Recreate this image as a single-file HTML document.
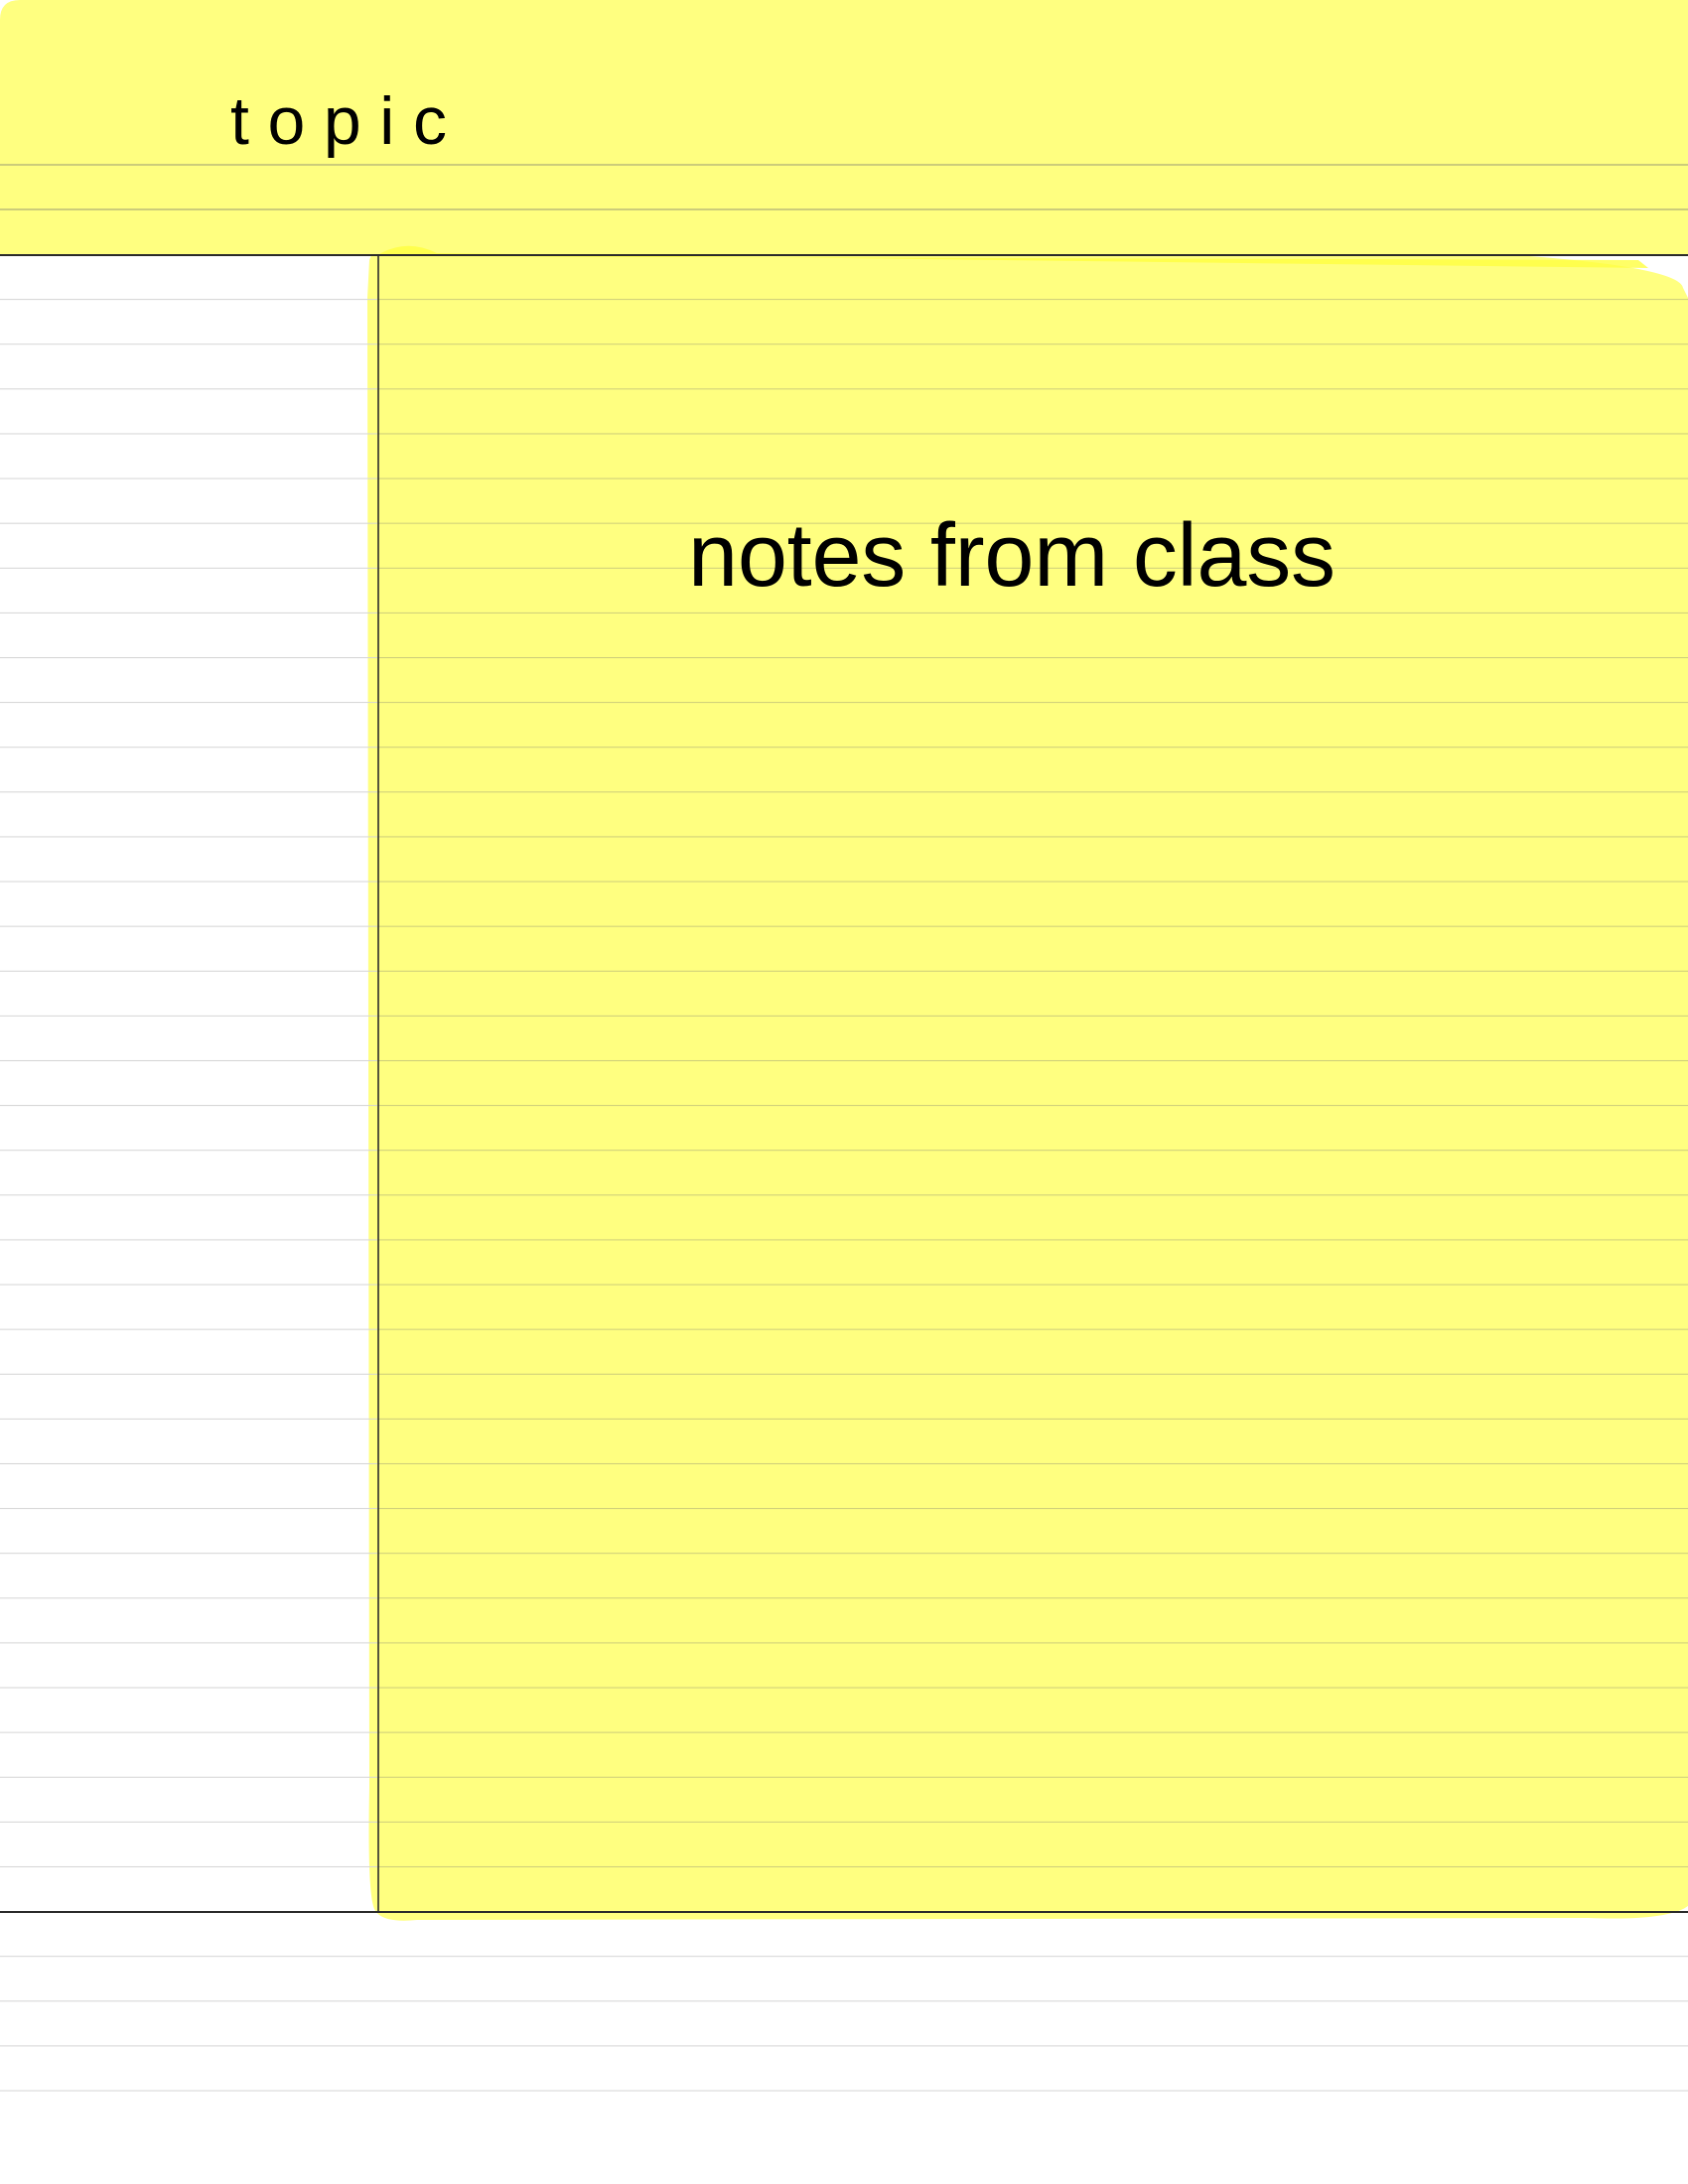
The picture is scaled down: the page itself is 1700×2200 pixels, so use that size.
<!DOCTYPE html>
<html><head><meta charset="utf-8"><style>
html,body{margin:0;padding:0;background:#fff;}
svg{display:block;}
</style></head><body>
<svg width="1700" height="2200" viewBox="0 0 1700 2200" xmlns="http://www.w3.org/2000/svg">
<defs>
<pattern id="pw" x="0" y="257" width="1700" height="45.11" patternUnits="userSpaceOnUse">
<rect x="0" y="44.11" width="1700" height="2" fill="#d4d4d4"/>
</pattern>
<pattern id="py" x="0" y="257" width="1700" height="45.11" patternUnits="userSpaceOnUse">
<rect x="0" y="44.11" width="1700" height="2" fill="#cccc7a"/>
</pattern>
</defs>
<rect width="1700" height="2200" fill="#ffffff"/>
<!-- top yellow -->
<path d="M0 20 Q0 0 20 0 L1700 0 L1700 258 L0 258 Z" fill="#ffff80"/>
<!-- right highlight -->
<path d="M372 262 Q380 240 400 236 Q420 232 440 252 L1400 250 Q1690 262 1695 290 L1700 300 L1700 1920 Q1680 1935 1600 1932 L420 1934 Q380 1938 376 1920 Q370 1900 372 1800 L370 300 Z" fill="#ffff80"/>
<path d="M382 256 Q410 240 440 255 L1660 270 L1650 262 L420 258 Z" fill="#ffff40" opacity="0.8"/>
<rect x="0" y="165" width="1700" height="2" fill="#cccc7a"/>
<rect x="0" y="210" width="1700" height="2" fill="#cccc7a"/>
<rect x="0" y="258" width="380" height="1668" fill="url(#pw)"/>
<rect x="381" y="258" width="1319" height="1668" fill="url(#py)"/>
<rect x="0" y="1927" width="1700" height="200" fill="url(#pw)"/>
<line x1="0" y1="257" x2="1700" y2="257" stroke="#2a2a2a" stroke-width="2"/>
<line x1="0" y1="1926" x2="1700" y2="1926" stroke="#2a2a2a" stroke-width="2"/>
<line x1="381" y1="257" x2="381" y2="1926" stroke="#2a2a2a" stroke-width="1.6"/>
<text x="232" y="145" font-family="Liberation Sans, sans-serif" font-size="68" fill="#000" textLength="218" lengthAdjust="spacing">topic</text>
<text x="693" y="590" font-family="Liberation Sans, sans-serif" font-size="90" fill="#000" textLength="652" lengthAdjust="spacing">notes from class</text>
</svg>
</body></html>
